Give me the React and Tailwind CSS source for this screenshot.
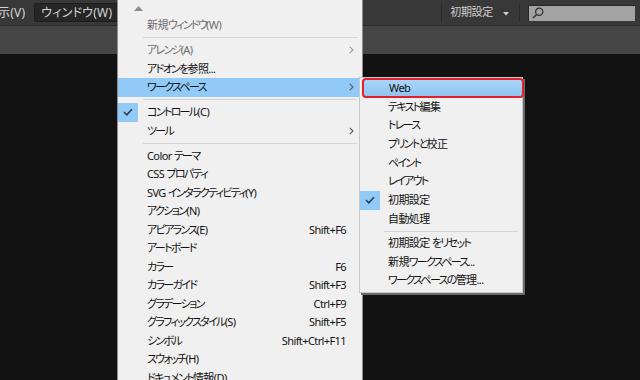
const mainItems = [
  { label: '新規ウィンドウ(W)', disabled: true },
  { sep: true },
  { label: 'アレンジ(A)', disabled: true, sub: true },
  { label: 'アドオンを参照...' },
  { label: 'ワークスペース', sub: true, active: true },
  { sep: true },
  { label: 'コントロール(C)', checked: true },
  { label: 'ツール', sub: true },
  { sep: true },
  { label: 'Color テーマ' },
  { label: 'CSS プロパティ' },
  { label: 'SVG インタラクティビティ(Y)' },
  { label: 'アクション(N)' },
  { label: 'アピアランス(E)', key: 'Shift+F6' },
  { label: 'アートボード' },
  { label: 'カラー', key: 'F6' },
  { label: 'カラーガイド', key: 'Shift+F3' },
  { label: 'グラデーション', key: 'Ctrl+F9' },
  { label: 'グラフィックスタイル(S)', key: 'Shift+F5' },
  { label: 'シンボル', key: 'Shift+Ctrl+F11' },
  { label: 'スウォッチ(H)' },
  { label: 'ドキュメント情報(D)' },
]

const workspaceItems = [
  { label: 'テキスト編集' },
  { label: 'トレース' },
  { label: 'プリントと校正' },
  { label: 'ペイント' },
  { label: 'レイアウト' },
  { label: '初期設定', checked: true },
  { label: '自動処理' },
  { sep: true },
  { label: '初期設定 をリセット' },
  { label: '新規ワークスペース...' },
  { label: 'ワークスペースの管理...' },
]

// kana in the Windows UI font are much narrower than kanji, so squeeze those runs
const Label = ({ text }) =>
  text.split(/([\u3041-\u30ff]+)/).map((part, i) =>
    /[\u3041-\u30ff]/.test(part) ? (
      <span key={i} className="tracking-[-1.7px]">{part}</span>
    ) : (
      part
    )
  )

const CheckBox = () => (
  <span className="w-[20px] h-full bg-[#91c9f7] flex items-center justify-center">
    <svg width="10" height="8" viewBox="0 0 10 8">
      <polyline points="1,4 3.8,6.8 9,1.2" fill="none" stroke="#2b3e57" strokeWidth="1.6" />
    </svg>
  </span>
)

const Chevron = ({ color = '#5a5a5a' }) => (
  <svg width="5" height="8" viewBox="0 0 5 8" className="mr-[8px]">
    <polyline points="0.8,0.8 4,4 0.8,7.2" fill="none" stroke={color} strokeWidth="1.1" />
  </svg>
)

const MainMenu = () => (
  <div className="absolute left-[117px] top-0 w-[246px] h-[400px] bg-[#f0f0f0] border-l border-r border-[#8e8e8e]">
    {/* scroll arrow */}
    <div className="h-[16px] flex items-center pl-[16px]">
      <svg width="9" height="5" viewBox="0 0 9 5">
        <polygon points="0,5 4.5,0 9,5" fill="#8c8c8c" />
      </svg>
    </div>
    {mainItems.map((item, idx) =>
      item.sep ? (
        <div key={idx} className="h-[6.5px] flex items-center pl-[25px] pr-[5px]">
          <div className="h-px w-full bg-[#d5d5d5]" />
        </div>
      ) : (
        <div
          key={idx}
          className={`h-[18.5px] flex items-center ${item.active ? 'bg-[#91c9f7]' : ''} ${item.disabled ? 'text-[#6d6d6d]' : 'text-[#111]'}`}
        >
          <div className="w-[29px] h-full flex items-center">{item.checked && <CheckBox />}</div>
          <span className="flex-1 whitespace-nowrap">
            <Label text={item.label} />
          </span>
          {item.key && <span className="pr-[16px]">{item.key}</span>}
          {item.sub && <Chevron color={item.disabled ? '#9a9a9a' : '#5a5a5a'} />}
        </div>
      )
    )}
  </div>
)

const WorkspaceMenu = () => (
  <div className="absolute left-[359px] top-[77px] w-[164px] bg-[#f0f0f0] border border-[#c9c9c9] shadow-[2px_2px_0_#6a6a6a] pb-[2px]">
    <div className="h-[19.5px] -mr-[2px] ml-[2px] rounded-[4px] border-2 border-[#e41e2b] bg-gradient-to-b from-[#a9d5f8] to-[#8fc5f2] flex items-center pl-[25px] text-[#111]">
      Web
    </div>
    {workspaceItems.map((item, idx) =>
      item.sep ? (
        <div key={idx} className="h-[5.5px] flex items-center pl-[24px] pr-[4px]">
          <div className="h-px w-full bg-[#d5d5d5]" />
        </div>
      ) : (
        <div key={idx} className="h-[18.7px] flex items-center text-[#111]">
          <div className="w-[28px] h-full flex items-center">{item.checked && <CheckBox />}</div>
          <span className="whitespace-nowrap">
            <Label text={item.label} />
          </span>
        </div>
      )
    )}
  </div>
)

export default function App() {
  return (
    <div className="relative w-[640px] h-[380px] overflow-hidden bg-[#121212] font-['Noto_Sans','Noto_Sans_CJK_JP',sans-serif] text-[11px] [font-feature-settings:'palt'] tracking-[-0.6px]">
      {/* top menu bar */}
      <div className="h-[25px] bg-[#383838] flex items-center text-[#d6d6d6] text-[12px] tracking-[0.2px] whitespace-nowrap">
        <span className="-ml-[2px] mr-[9px]">示(V)</span>
        <span className="h-[19px] px-[6px] flex items-center bg-[#262626] border border-[#1d1d1d] rounded-[2px]">ウィンドウ(W)</span>
        <div className="flex-1" />
        <div className="w-px h-[19px] bg-[#2a2a2a]" />
        <span className="ml-[8px] text-[#cfcfcf] text-[11px] tracking-[-0.3px]">初期設定</span>
        <svg width="6" height="4" viewBox="0 0 6 4" className="ml-[10px] mt-[2px]">
          <polygon points="0,0 6,0 3,3.5" fill="#cfcfcf" />
        </svg>
        <div className="w-px h-[19px] bg-[#2a2a2a] ml-[10px]" />
        <div className="ml-[8px] mr-[5px] w-[107px] h-[16px] bg-[#a3a3a3] border-t border-l border-[#262626] flex items-center pl-[3px]">
          <svg width="12" height="12" viewBox="0 0 12 12">
            <circle cx="7.2" cy="4.8" r="3.6" fill="none" stroke="#2f2f2f" strokeWidth="1.2" />
            <line x1="4.6" y1="7.4" x2="1" y2="11" stroke="#2f2f2f" strokeWidth="1.4" />
          </svg>
        </div>
      </div>
      <div className="h-px bg-[#2b2b2b]" />
      {/* tool options bar */}
      <div className="h-[28px] bg-[#454545]" />

      <MainMenu />
      <WorkspaceMenu />
    </div>
  )
}
